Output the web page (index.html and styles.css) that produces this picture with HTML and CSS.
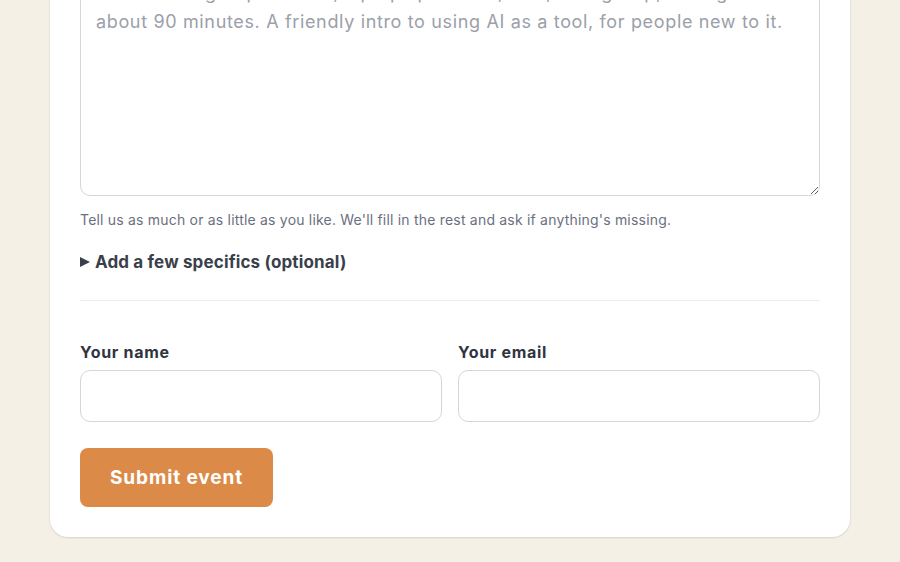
FILE: index.html
```html
<!DOCTYPE html>
<html lang="en">
<head>
<meta charset="utf-8">
<title>Submit an event</title>
<link rel="stylesheet" href="styles.css">
</head>
<body>
<main class="page">
  <header class="intro">
    <h1 class="intro-title">Share an event</h1>
    <p class="intro-text">Running something in the community? Describe it in your own words and we'll take care of the listing.</p>
  </header>
  <form class="card">
    <div class="field">
      <label class="label" for="desc">What's happening?</label>
      <textarea class="textarea" id="desc" placeholder="e.g. Beginner workshop at the Maple Street Library on Saturday at 2pm,&#10;a hands-on group session, laptops provided, free, no sign-up, lasting&#10;about 90 minutes. A friendly intro to using AI as a tool, for people new to it."></textarea>
      <p class="hint">Tell us as much or as little as you like. We'll fill in the rest and ask if anything's missing.</p>
    </div>
    <details class="specifics">
      <summary class="specifics-toggle">Add a few specifics (optional)</summary>
    </details>
    <hr class="divider">
    <div class="contact">
      <div class="field">
        <label class="label" for="name">Your name</label>
        <input class="input" id="name" type="text">
      </div>
      <div class="field">
        <label class="label" for="email">Your email</label>
        <input class="input" id="email" type="email">
      </div>
    </div>
    <div class="actions">
      <button class="submit" type="submit">Submit event</button>
    </div>
  </form>
</main>
<script src="script.js"></script>
</body>
</html>
```

FILE: styles.css
```css
* { box-sizing: border-box; }
html, body { margin: 0; padding: 0; }
body {
  background: #f5f0e6;
  font-family: "Inter", "Noto Sans", sans-serif;
  color: #2f3441;
}
.page {
  width: 800px;
  margin: 0 auto;
  padding: 40px 0 25px;
}
.intro { padding: 0 30px 24px; }
.intro-title { margin: 0 0 8px; font-size: 30px; font-weight: 700; }
.intro-text { margin: 0; font-size: 16px; color: #5b6170; line-height: 1.5; }
.card {
  background: #ffffff;
  border-radius: 18px;
  padding: 30px 30px 30px;
  box-shadow: 0 1px 2px rgba(60, 50, 30, 0.12), 0 0 0 1px rgba(60, 50, 30, 0.03);
  display: flex;
  flex-direction: column;
}
.field { display: flex; flex-direction: column; min-width: 0; }
.label {
  font-size: 16px;
  font-weight: 700;
  line-height: 24px;
  letter-spacing: 0.7px;
  color: #2f3441;
  margin-bottom: 6px;
}
.textarea {
  width: 100%;
  height: 261px;
  padding: 14px 15px;
  border: 1px solid #d6d6da;
  border-radius: 10px;
  font-family: inherit;
  font-size: 18px;
  line-height: 28.8px;
  letter-spacing: 0.65px;
  color: #2f3441;
  resize: vertical;
}
.textarea::placeholder { color: #9ba0a9; }
.hint {
  margin: 13px 0 0;
  font-size: 14px;
  line-height: 21px;
  letter-spacing: 0.2px;
  color: #6b7080;
}
.specifics { margin-top: 19px; }
.specifics-toggle {
  list-style: none;
  display: flex;
  align-items: center;
  gap: 5px;
  font-size: 17px;
  font-weight: 700;
  line-height: 26px;
  letter-spacing: 0.15px;
  color: #3a3f4c;
  cursor: pointer;
}
.specifics-toggle::-webkit-details-marker { display: none; }
.specifics-toggle::before {
  content: "";
  flex-shrink: 0;
  width: 0;
  height: 0;
  border-left: 10px solid #3a3f4c;
  border-top: 5.5px solid transparent;
  border-bottom: 5.5px solid transparent;
}
.divider {
  border: 0;
  border-top: 1px solid #ececee;
  margin: 25px 0 39px;
  width: 100%;
}
.contact {
  display: grid;
  grid-template-columns: 1fr 1fr;
  gap: 16px;
}
.input {
  width: 100%;
  height: 52px;
  border: 1px solid #d6d6da;
  border-radius: 10px;
  padding: 0 14px;
  font-family: inherit;
  font-size: 16px;
}
.actions { margin-top: 26px; display: flex; }
.submit {
  background: #db8a47;
  color: #ffffff;
  border: 0;
  border-radius: 8px;
  height: 59px;
  padding: 0 30px;
  font-family: inherit;
  font-size: 19px;
  font-weight: 700;
  letter-spacing: 0.9px;
  cursor: pointer;
}
```

FILE: script.js
```js
window.scrollTo(0, document.documentElement.scrollHeight);
window.addEventListener('load', function () {
  window.scrollTo(0, document.documentElement.scrollHeight);
});
```
